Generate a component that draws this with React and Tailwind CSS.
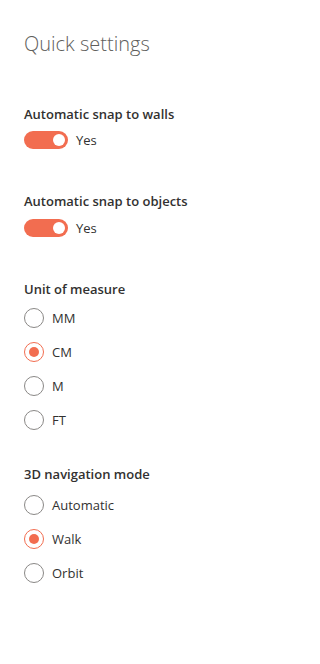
import React, { useState } from "react";

const ORANGE = "#f26d50";

const Toggle = ({ checked, onChange, label }) => (
    <button className="flex items-center h-[20px] gap-[8px]" onClick={() => onChange(!checked)}>
        <span
            className={`flex items-center w-[44px] h-[18px] rounded-full px-[3px] ${
                checked ? "bg-[#f26d50] justify-end" : "bg-white border border-[#8a8886] justify-start"
            }`}>
            <span className={`w-[12px] h-[12px] rounded-full ${checked ? "bg-white" : "bg-[#605e5c]"}`} />
        </span>
        <span className="text-[13px] leading-[20px] text-[#323130]">{label}</span>
    </button>
);

const RadioGroup = ({ options, value, onChange }) => (
    <div className="flex flex-col gap-[14px]">
        {options.map((opt) => (
            <button key={opt} className="flex items-center h-[20px] gap-[8px]" onClick={() => onChange(opt)}>
                <span
                    className={`flex items-center justify-center w-[20px] h-[20px] rounded-full border ${
                        value === opt ? "border-[#f26d50]" : "border-[#8a8886]"
                    }`}>
                    {value === opt && <span className="w-[10px] h-[10px] rounded-full bg-[#f26d50]" />}
                </span>
                <span className="text-[13px] leading-[20px] text-[#323130]">{opt}</span>
            </button>
        ))}
    </div>
);

const Heading = ({ children }) => (
    <div className="text-[13px] leading-[20px] font-semibold text-[#323130]">{children}</div>
);

export default function App() {
    const [snapWalls, setSnapWalls] = useState(true);
    const [snapObjects, setSnapObjects] = useState(true);
    const [unit, setUnit] = useState("CM");
    const [navMode, setNavMode] = useState("Walk");

    return (
        <div
            className="w-[309px] h-[664px] bg-white px-6 pt-[30px]"
            style={{ fontFamily: '"Open Sans", "Noto Sans", sans-serif' }}>
            <h1 className="text-[20px] leading-[28px] font-light text-[#605e5c]">Quick settings</h1>

            <div className="mt-[46px]">
                <Heading>Automatic snap to walls</Heading>
                <div className="mt-[6px]">
                    <Toggle checked={snapWalls} onChange={setSnapWalls} label={snapWalls ? "Yes" : "No"} />
                </div>
            </div>

            <div className="mt-[41px]">
                <Heading>Automatic snap to objects</Heading>
                <div className="mt-[7px]">
                    <Toggle checked={snapObjects} onChange={setSnapObjects} label={snapObjects ? "Yes" : "No"} />
                </div>
            </div>

            <div className="mt-[41px]">
                <Heading>Unit of measure</Heading>
                <div className="mt-[9px]">
                    <RadioGroup options={["MM", "CM", "M", "FT"]} value={unit} onChange={setUnit} />
                </div>
            </div>

            <div className="mt-[34px]">
                <Heading>3D navigation mode</Heading>
                <div className="mt-[11px]">
                    <RadioGroup options={["Automatic", "Walk", "Orbit"]} value={navMode} onChange={setNavMode} />
                </div>
            </div>
        </div>
    );
}
